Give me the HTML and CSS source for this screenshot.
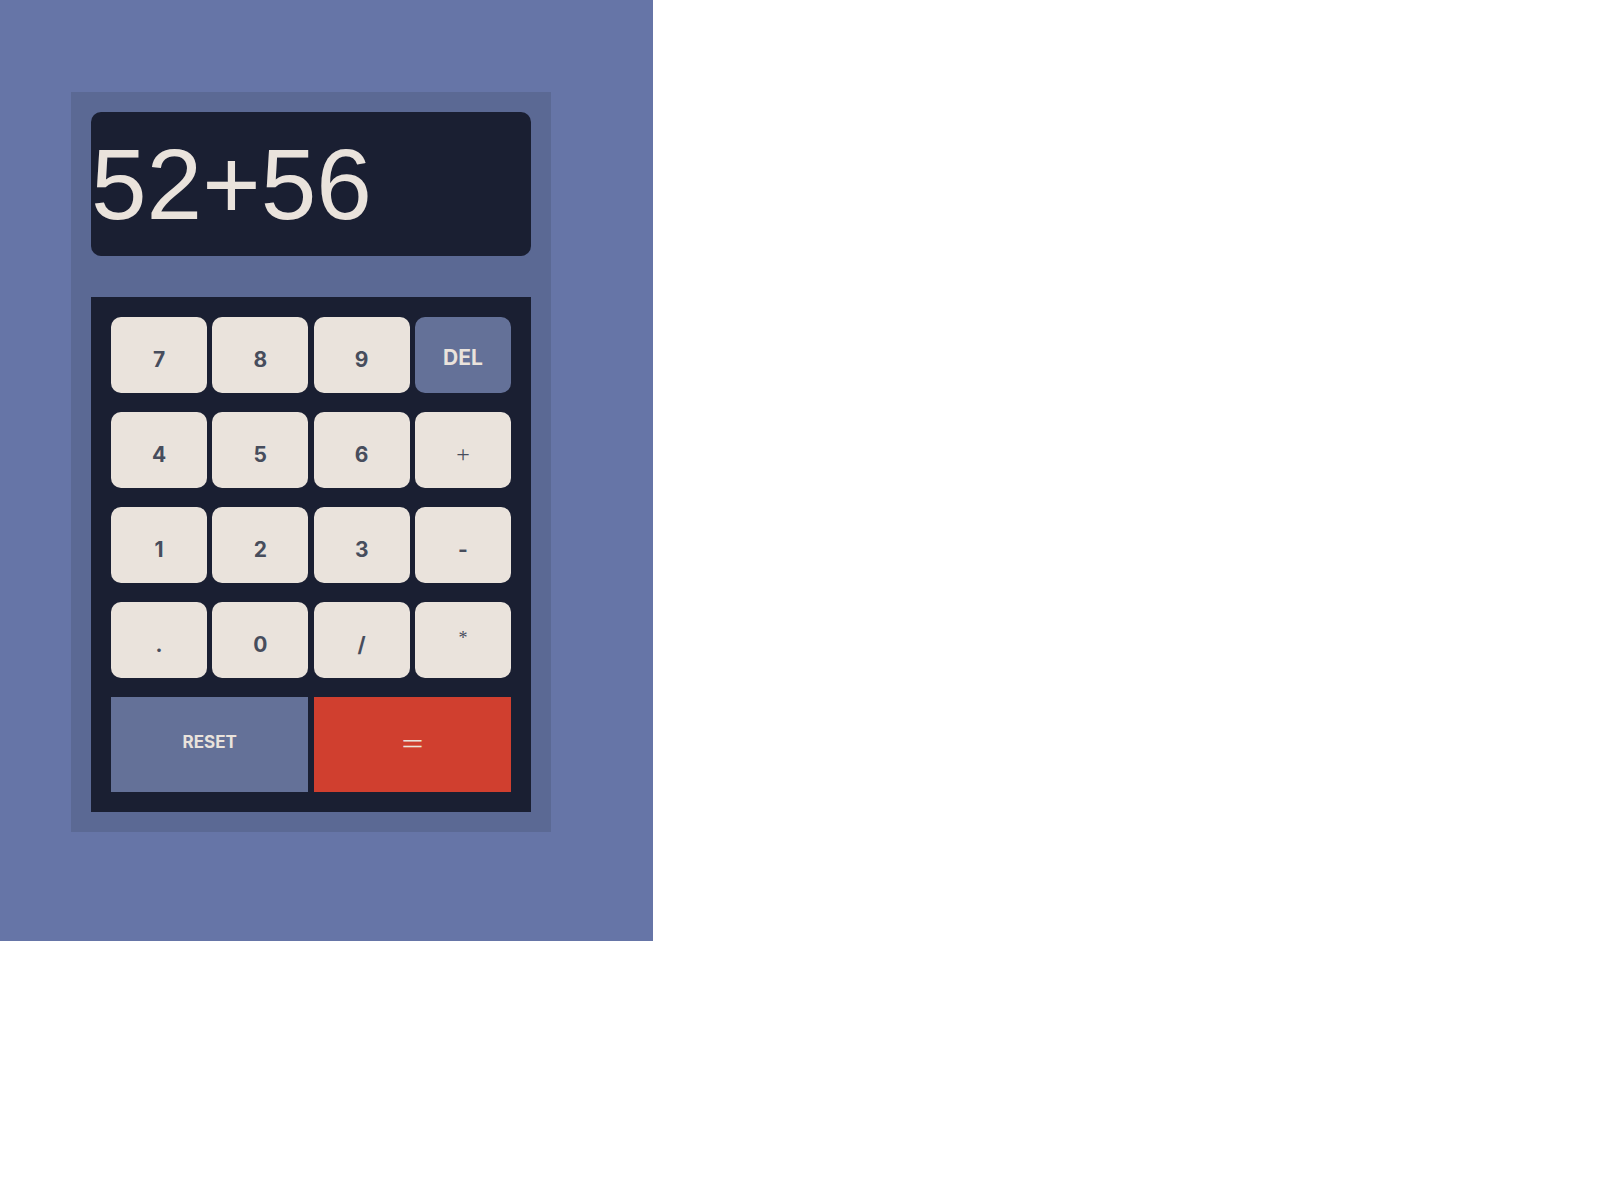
FILE: index.html
```html
<!DOCTYPE html>
<html lang="en">
<head>
<meta charset="utf-8">
<title>Calculator</title>
<link rel="stylesheet" href="styles.css">
</head>
<body>
<div class="page">
  <div class="calculator">
    <div class="screen">52+56</div>
    <div class="keypad">
      <button class="key">7</button>
      <button class="key">8</button>
      <button class="key">9</button>
      <button class="key key-del">DEL</button>
      <button class="key">4</button>
      <button class="key">5</button>
      <button class="key">6</button>
      <button class="key"><span class="sym sym-plus">+</span></button>
      <button class="key">1</button>
      <button class="key">2</button>
      <button class="key">3</button>
      <button class="key">-</button>
      <button class="key">.</button>
      <button class="key">0</button>
      <button class="key">/</button>
      <button class="key"><span class="sym sym-star">*</span></button>
      <button class="key key-reset">RESET</button>
      <button class="key key-equals"><span class="sym sym-eq">=</span></button>
    </div>
  </div>
</div>
</body>
</html>
```
FILE: styles.css
```css
html {
  background: #ffffff;
}
body {
  margin: 0;
}
.page {
  width: 653px;
  height: 941px;
  box-sizing: border-box;
  padding: 92px 0 0 71px;
  background: #6675a7;
}
.calculator {
  width: 480px;
  box-sizing: border-box;
  padding: 20px;
  background: #5b6994;
  display: flex;
  flex-direction: column;
  gap: 41px;
}
.screen {
  height: 144px;
  border-radius: 10px;
  background: #1a1f32;
  color: #eae3dc;
  font-family: "Liberation Sans", Arial, sans-serif;
  font-size: 100px;
  line-height: 115px;
  padding-top: 15px;
  box-sizing: border-box;
  white-space: nowrap;
}
.keypad {
  background: #1a1f32;
  padding: 20px;
  display: grid;
  grid-template-columns: repeat(4, 1fr);
  grid-template-rows: repeat(4, 75.5px) 94.5px;
  column-gap: 5.33px;
  row-gap: 19.5px;
}
.key {
  border: none;
  margin: 0;
  padding: 0;
  border-radius: 10px;
  background: #eae3dc;
  color: #474d5c;
  font-family: Inter, "Noto Sans", sans-serif;
  font-weight: 700;
  font-size: 21px;
  display: flex;
  align-items: center;
  justify-content: center;
  padding-top: 10px;
}
.key-del {
  background: #647198;
  color: #eae3dc;
  padding-top: 6px;
}
.key-reset {
  grid-column: span 2;
  border-radius: 0;
  background: #647198;
  color: #eae3dc;
  font-size: 17px;
  padding-top: 0;
  padding-bottom: 4px;
}
.key-equals {
  grid-column: span 2;
  border-radius: 0;
  background: #d03f2f;
  color: #eae3dc;
  padding-top: 0;
}
.sym {
  font-family: "Liberation Serif", serif;
  font-weight: 400;
}
.sym-plus {
  font-size: 24px;
}
.sym-star {
  font-size: 18px;
  position: relative;
  top: -6px;
}
.sym-eq {
  font-size: 30px;
  transform: scaleX(1.3);
}
```
